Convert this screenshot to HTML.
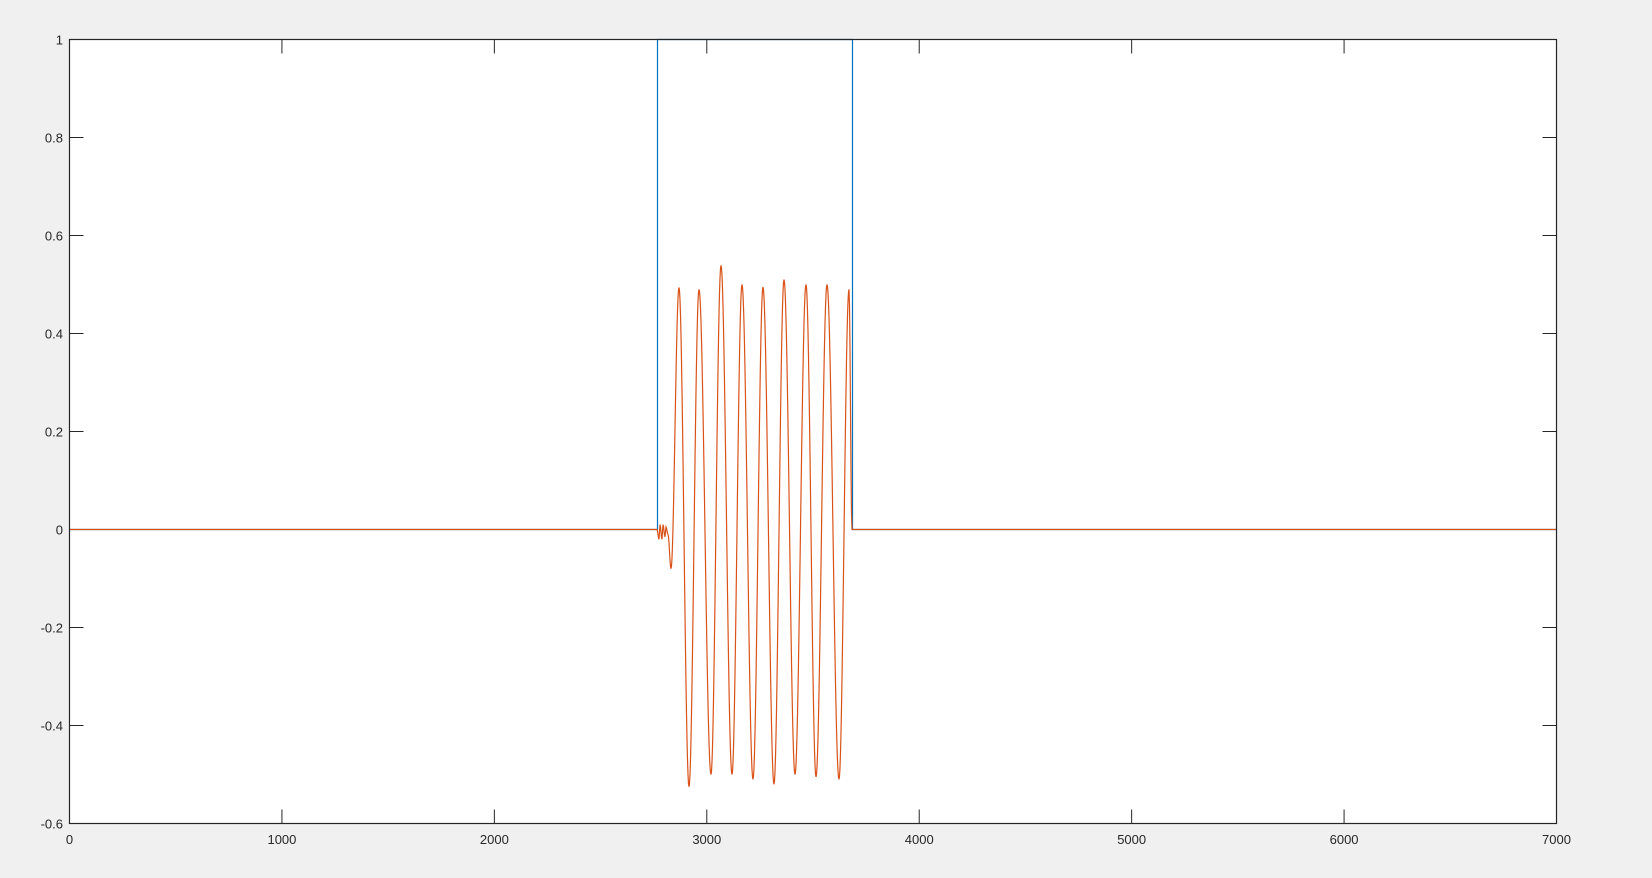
<!DOCTYPE html>
<html><head><style>
html,body{margin:0;padding:0;background:#f0f0f0;width:1652px;height:878px;overflow:hidden}
svg{position:absolute;left:0;top:0}
text{font-family:"Liberation Sans",sans-serif;font-size:13px;fill:#262626}
</style></head><body>
<svg id="s" width="1652" height="878" xmlns="http://www.w3.org/2000/svg">
<rect x="69.5" y="39.5" width="1487" height="784" fill="#fff"/>
<g id="ticks" stroke="#262626" stroke-width="1" fill="none"></g>
<g id="labels"></g>
<path d="M69.5 529.5 H657.5 V39.5 H852.5 V529.5 H1556.5" stroke="#0072bd" stroke-width="1.2" fill="none"/>
<path id="o" stroke="#d95319" stroke-width="1.2" fill="none"/>
<rect x="69.5" y="39.5" width="1487" height="784" fill="none" stroke="#262626" stroke-width="1.2"/>
</svg>
<script>
var ns="http://www.w3.org/2000/svg",T=document.getElementById('ticks'),L=document.getElementById('labels');
function el(p,n,a,t){var e=document.createElementNS(ns,n);for(var k in a)e.setAttribute(k,a[k]);if(t!=null)e.textContent=t;p.appendChild(e);}
for(var k=0;k<=7;k++){var x=69.5+k*212.43;
 el(T,'line',{x1:x,y1:823.5,x2:x,y2:809.5});el(T,'line',{x1:x,y1:39.5,x2:x,y2:53.5});
 el(L,'text',{x:x,y:844,'text-anchor':'middle'},String(k*1000));}
var yl=['1','0.8','0.6','0.4','0.2','0','-0.2','-0.4','-0.6'];
for(var i=0;i<9;i++){var y=39.5+i*98;
 el(T,'line',{x1:69.5,y1:y,x2:83.5,y2:y});el(T,'line',{x1:1556.5,y1:y,x2:1542.5,y2:y});
 el(L,'text',{x:63,y:y+5,'text-anchor':'end'},yl[i]);}
var ex=[[657,0],[659,-0.02],[660,0.01],[662,-0.02],[663,0.01],[665,-0.015],[666,0.005],[668,-0.01],[671,-0.08],[679,0.494],[689,-0.525],[699,0.49],[711,-0.50],[721,0.539],[732,-0.50],[742,0.50],[753,-0.51],[763,0.495],[774,-0.52],[784,0.51],[795,-0.50],[806,0.50],[816,-0.505],[827,0.50],[839,-0.51],[849,0.49],[852,0]];
function Y(v){return 529.5-v*490;}
var d='M69.5 529.5 L657 529.5';
for(var j=0;j<ex.length-1;j++){var a=ex[j],b=ex[j+1],n=Math.max(2,Math.round((b[0]-a[0])*2));
 for(var s=1;s<=n;s++){var t=s/n,f=(1-Math.cos(Math.PI*t))/2;d+=' L'+(a[0]+(b[0]-a[0])*t).toFixed(2)+' '+Y(a[1]+(b[1]-a[1])*f).toFixed(2);}}
d+=' L1556.5 529.5';
document.getElementById('o').setAttribute('d',d);
</script>
</body></html>
